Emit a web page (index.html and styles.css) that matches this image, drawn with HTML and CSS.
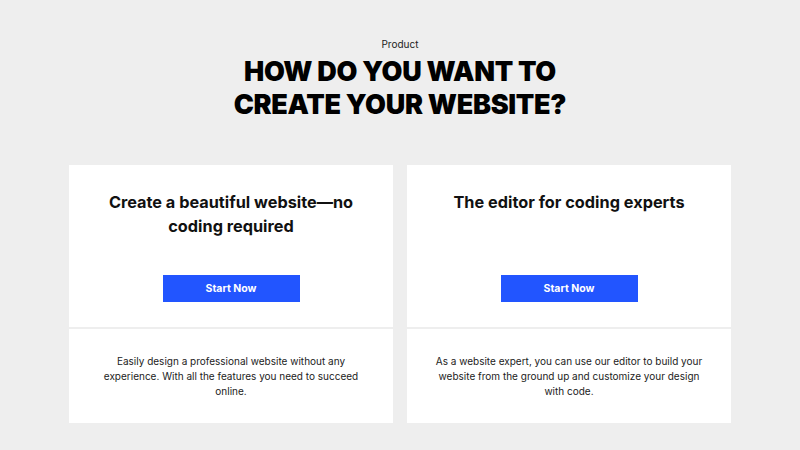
FILE: index.html
```html
<!DOCTYPE html>
<html lang="en">
<head>
<meta charset="utf-8">
<title>How do you want to create your website?</title>
<link rel="stylesheet" href="styles.css">
</head>
<body>
<main class="page">
  <header class="intro">
    <p class="eyebrow">Product</p>
    <h1 class="headline">HOW DO YOU WANT TO<br>CREATE YOUR WEBSITE?</h1>
  </header>
  <section class="cards">
    <article class="card">
      <div class="card-top">
        <h2 class="card-title">Create a beautiful website—no coding required</h2>
        <a class="btn" href="#">Start Now</a>
      </div>
      <div class="card-bottom">
        <p class="card-text">Easily design a professional website without any experience. With all the features you need to succeed online.</p>
      </div>
    </article>
    <article class="card">
      <div class="card-top">
        <h2 class="card-title">The editor for coding experts</h2>
        <a class="btn" href="#">Start Now</a>
      </div>
      <div class="card-bottom">
        <p class="card-text">As a website expert, you can use our editor to build your website from the ground up and customize your design with code.</p>
      </div>
    </article>
  </section>
</main>
</body>
</html>
```
FILE: styles.css
```css
* { box-sizing: border-box; }
html, body { margin: 0; padding: 0; }
body {
  background: #eeeeee;
  font-family: Inter, "Liberation Sans", sans-serif;
  color: #111;
  width: 800px;
  height: 450px;
  overflow: hidden;
}
.page {
  display: flex;
  flex-direction: column;
  align-items: center;
  padding-top: 38px;
}
.intro { text-align: center; }
.eyebrow {
  margin: 0;
  font-size: 10px;
  line-height: 12px;
  color: #222;
}
.headline {
  margin: 5px 0 0;
  font-family: Inter, sans-serif;
  font-weight: 900;
  font-size: 27px;
  line-height: 33px;
  letter-spacing: -0.3px;
  color: #000;
}
.cards {
  margin-top: 44px;
  display: flex;
  gap: 14px;
}
.card {
  width: 324px;
  display: flex;
  flex-direction: column;
  gap: 2px;
}
.card-top {
  background: #fff;
  display: flex;
  flex-direction: column;
  align-items: center;
  padding: 25px 30px 25px;
}
.card-title {
  margin: 0;
  min-height: 48px;
  max-width: 256px;
  text-align: center;
  font-size: 16.3px;
  line-height: 24px;
  font-weight: 700;
  color: #111;
}
.btn {
  margin-top: 37px;
  width: 137px;
  height: 27px;
  display: flex;
  align-items: center;
  justify-content: center;
  background: #2255ff;
  color: #fff;
  font-size: 10.5px;
  font-weight: 700;
  text-decoration: none;
}
.card-bottom {
  background: #fff;
  padding: 25px 28px 24px;
}
.card-text {
  margin: 0;
  text-align: center;
  font-size: 10px;
  line-height: 15px;
  color: #222;
}
```
